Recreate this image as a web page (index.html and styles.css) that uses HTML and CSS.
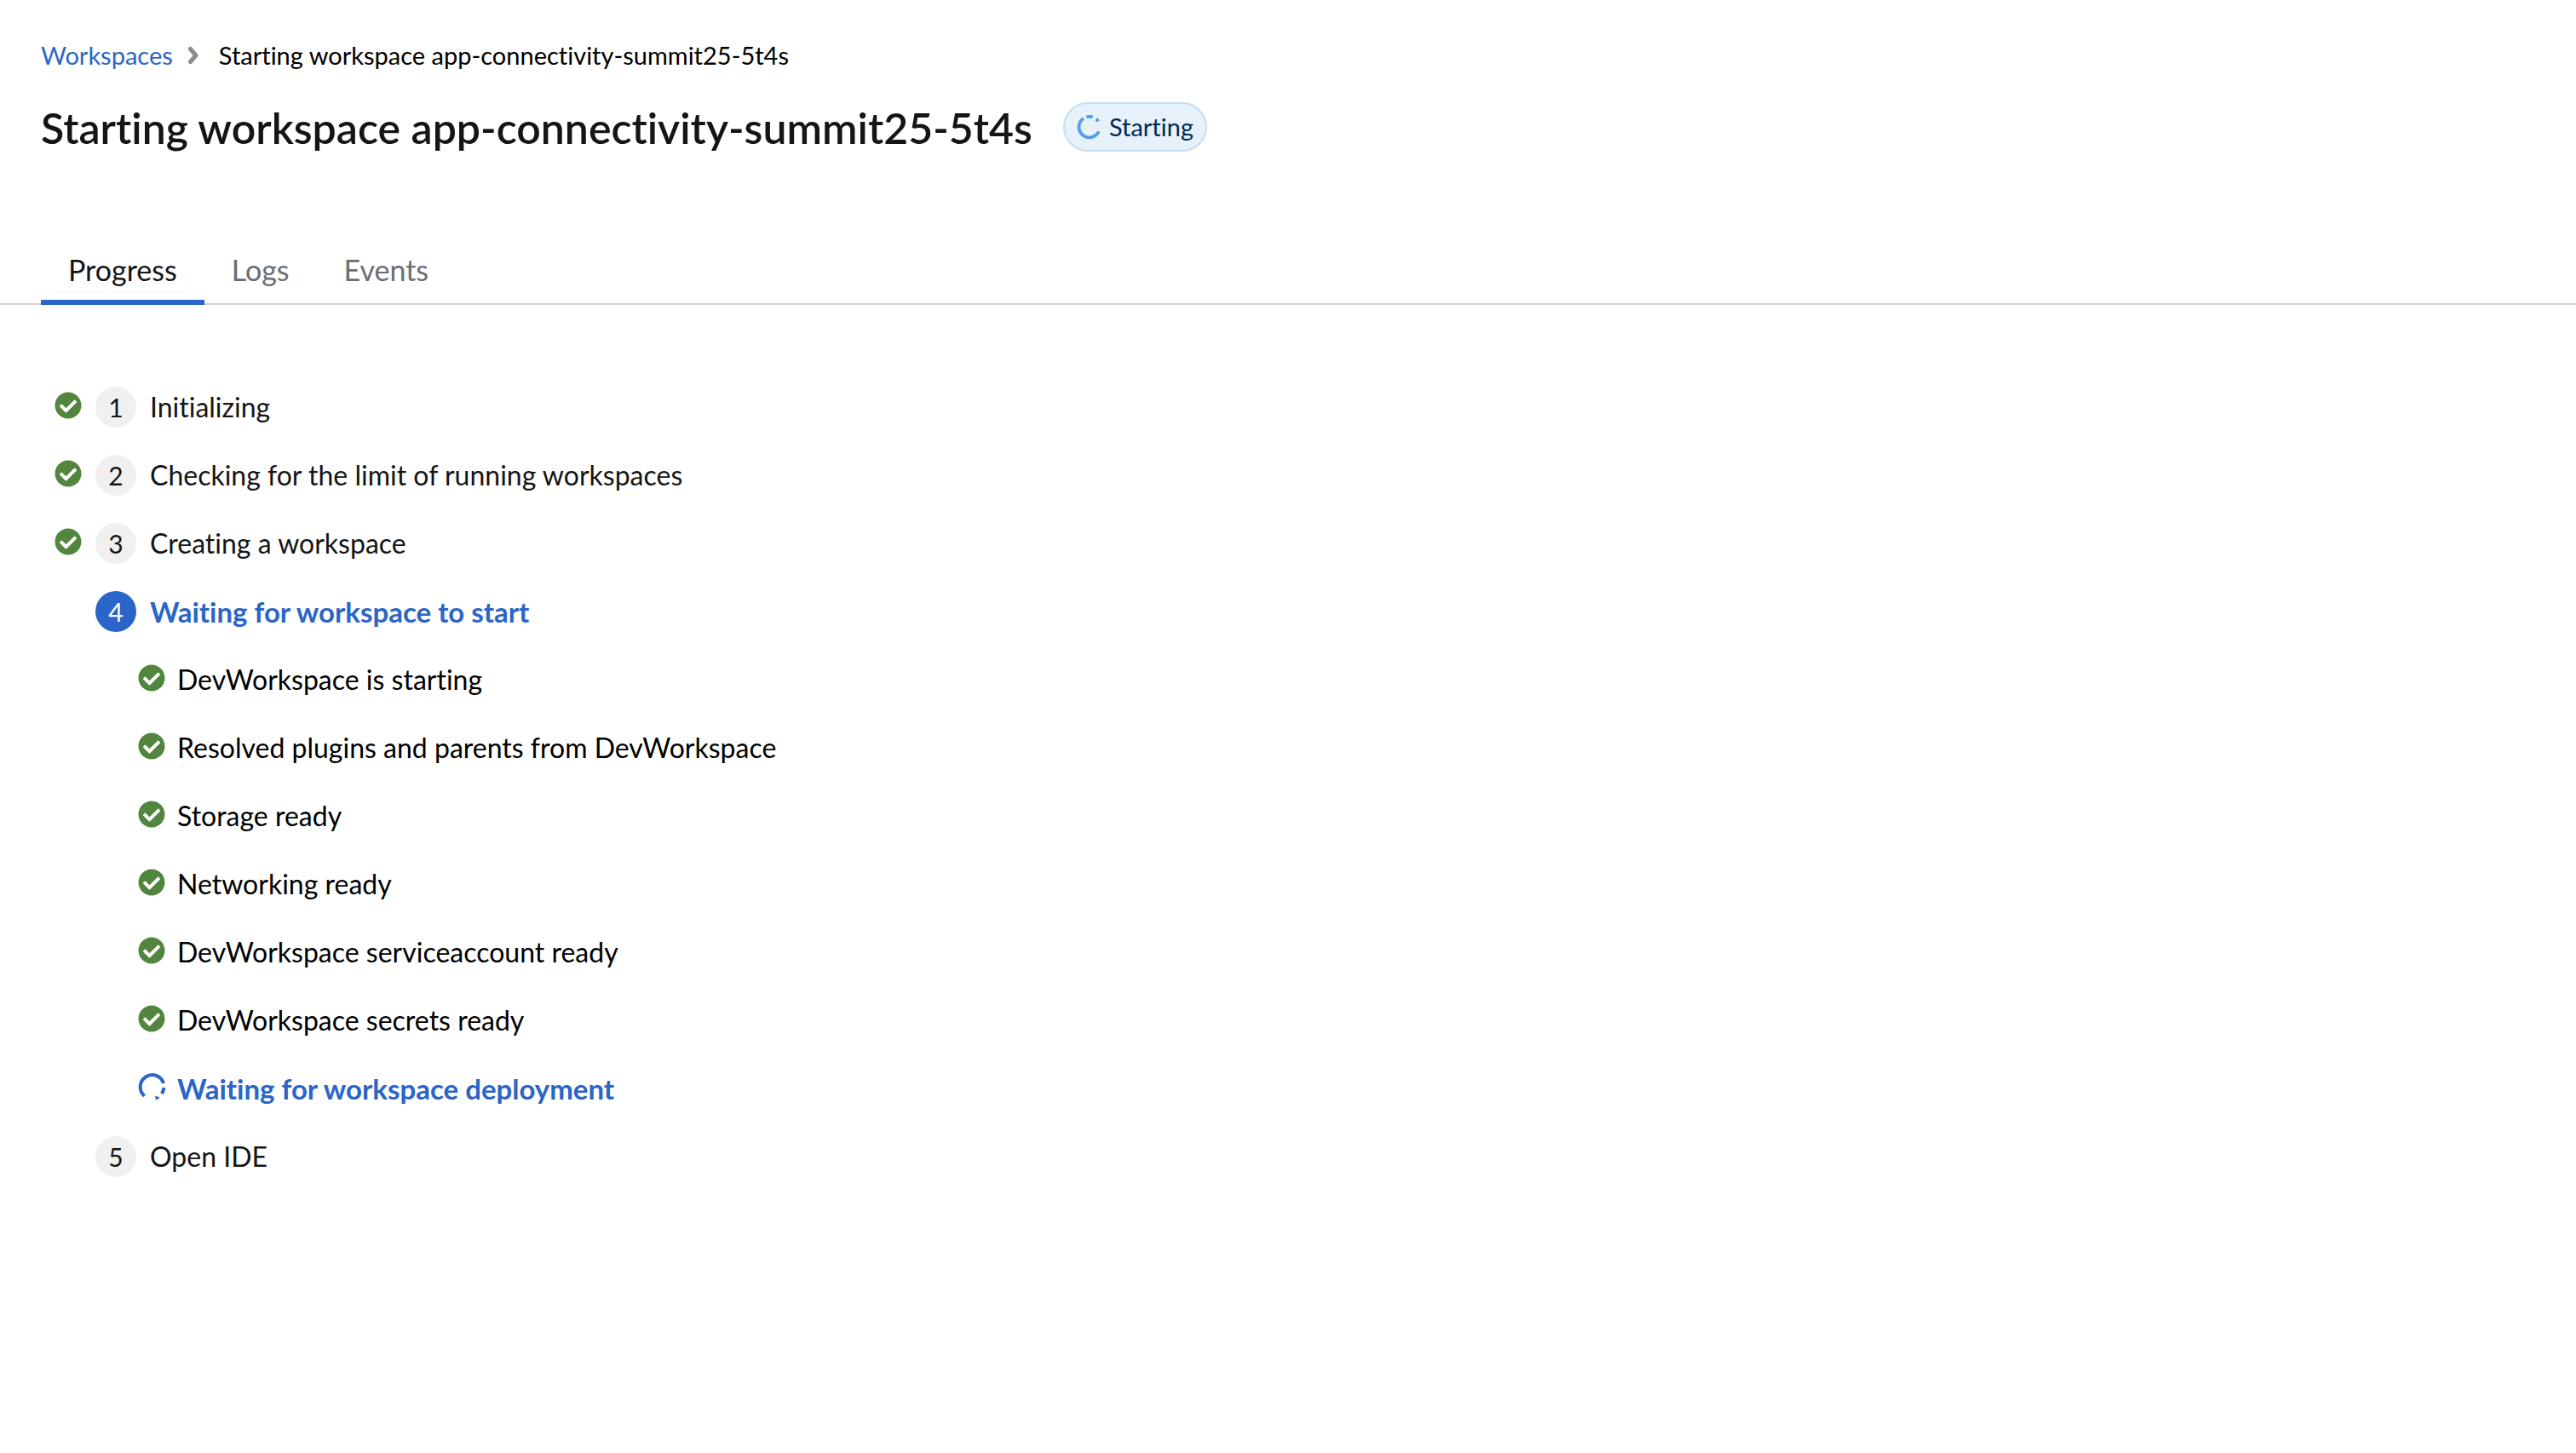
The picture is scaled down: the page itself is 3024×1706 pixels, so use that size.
FILE: index.html
```
<!DOCTYPE html>
<html lang="en">
<head>
  <meta charset="utf-8">
  <meta name="viewport" content="width=device-width, initial-scale=1">
  <title>Starting workspace app-connectivity-summit25-5t4s</title>
  <link rel="stylesheet" href="styles.css">
</head>
<body>
  <svg width="0" height="0" class="sprite" aria-hidden="true">
    <symbol id="check" viewBox="0 0 512 512">
      <path d="M504 256c0 137-111 248-248 248S8 393 8 256 119 8 256 8s248 111 248 248zM227.300 387.300l184-184c6.200-6.200 6.200-16.400 0-22.600l-22.600-22.600c-6.200-6.200-16.400-6.200-22.600 0L216 308.100l-70.100-70.100c-6.200-6.200-16.400-6.200-22.600 0l-22.600 22.600c-6.200 6.200-6.200 16.400 0 22.600l104 104c6.200 6.200 16.400 6.200 22.600 .1z"/>
    </symbol>
  </svg>

  <header class="page-header">
    <nav aria-label="Breadcrumb">
      <ol class="breadcrumb">
        <li><a href="#workspaces">Workspaces</a></li>
        <li class="breadcrumb-current" aria-current="page">
          <svg class="chevron" viewBox="0 0 12 20" aria-hidden="true"><path d="M2.500 2.500 9 10l-6.500 7.500"/></svg>
          Starting workspace app-connectivity-summit25-5t4s
        </li>
      </ol>
    </nav>
    <div class="title-row">
      <h1>Starting workspace app-connectivity-summit25-5t4s</h1>
      <span class="status">
        <svg class="status-icon" viewBox="0 0 32 32" aria-hidden="true">
          <path d="M27.500 21.700A13 13 0 1 1 8.500 5.400"/>
          <path d="M12.200 3.600A13 13 0 0 1 20 3.600"/>
          <path d="M24.500 6.200A13 13 0 0 1 27 9"/>
        </svg>
        Starting
      </span>
    </div>
  </header>

  <div class="tabs" role="tablist">
    <button class="tab tab-active" type="button" role="tab" aria-selected="true">Progress</button>
    <button class="tab" type="button" role="tab" aria-selected="false">Logs</button>
    <button class="tab" type="button" role="tab" aria-selected="false">Events</button>
  </div>

  <main class="progress">
    <ol class="steps">
      <li><div class="step"><svg class="icon"><use href="#check"/></svg><span class="number">1</span>Initializing</div></li>
      <li><div class="step"><svg class="icon"><use href="#check"/></svg><span class="number">2</span>Checking for the limit of running workspaces</div></li>
      <li><div class="step"><svg class="icon"><use href="#check"/></svg><span class="number">3</span>Creating a workspace</div></li>
      <li>
        <div class="step step-current"><span class="icon"></span><span class="number">4</span>Waiting for workspace to start</div>
        <ul class="substeps">
          <li class="substep"><svg class="icon"><use href="#check"/></svg>DevWorkspace is starting</li>
          <li class="substep"><svg class="icon"><use href="#check"/></svg>Resolved plugins and parents from DevWorkspace</li>
          <li class="substep"><svg class="icon"><use href="#check"/></svg>Storage ready</li>
          <li class="substep"><svg class="icon"><use href="#check"/></svg>Networking ready</li>
          <li class="substep"><svg class="icon"><use href="#check"/></svg>DevWorkspace serviceaccount ready</li>
          <li class="substep"><svg class="icon"><use href="#check"/></svg>DevWorkspace secrets ready</li>
          <li class="substep substep-current">
            <svg class="icon spinner" viewBox="0 0 32 32" aria-hidden="true">
              <path d="M7.600 26.800A14 14 0 1 1 30 11.800"/>
              <path d="M30.400 17A14 14 0 0 1 27.800 24.200"/>
              <path class="spinner-dot" d="M20 26.500l6 2.200-5 3z"/>
            </svg>Waiting for workspace deployment
          </li>
        </ul>
      </li>
      <li><div class="step"><span class="icon"></span><span class="number">5</span>Open IDE</div></li>
    </ol>
  </main>
</body>
</html>
```
FILE: styles.css
```
* {
  box-sizing: border-box;
}

body {
  margin: 0;
  background: #fff;
  color: #151515;
  font-family: Lato, "Open Sans", sans-serif;
  font-size: 32px;
  font-variant-ligatures: none;
  line-height: 48px;
}

ol,
ul {
  margin: 0;
  padding: 0;
  list-style: none;
}

.sprite {
  position: absolute;
}

.page-header {
  padding: 44px 48px 0;
}

.breadcrumb {
  display: flex;
  gap: 18px;
  color: #000;
  font-size: 29px;
  line-height: 42px;
}

.breadcrumb a {
  color: #2b65c7;
  text-decoration: none;
}

.breadcrumb-current {
  display: flex;
  align-items: center;
  gap: 24px;
}

.chevron {
  width: 12px;
  height: 20px;
  fill: none;
  stroke: #8a8d90;
  stroke-width: 5px;
  stroke-linejoin: round;
  stroke-linecap: round;
  overflow: visible;
}

.title-row {
  display: flex;
  align-items: center;
  gap: 36px;
  padding-top: 32px;
}

h1 {
  margin: 0;
  font-size: 50px;
  font-weight: 600;
  line-height: 64px;
}

.status {
  display: flex;
  align-items: center;
  gap: 8px;
  height: 58px;
  margin-bottom: 2px;
  padding: 0 14px;
  border: 2px solid #bee1f4;
  border-radius: 29px;
  background: #e7f1fa;
  color: #002952;
  font-size: 29px;
}

.status-icon {
  width: 30px;
  height: 30px;
  fill: none;
  stroke: #519de9;
  stroke-width: 4px;
}

.tabs {
  display: flex;
  margin-top: 98px;
  padding: 0 48px;
  border-bottom: 2px solid #d2d2d2;
}

.tab {
  margin-bottom: -2px;
  padding: 13px 32px 11px;
  border: 0;
  border-bottom: 6px solid transparent;
  background: none;
  color: #6a6e73;
  font: inherit;
  font-size: 34px;
  line-height: 48px;
  cursor: pointer;
}

.tab-active {
  border-bottom-color: #2b65c7;
  color: #151515;
}

.progress {
  padding: 96px 64px;
}

.steps li + li,
.substeps {
  margin-top: 32px;
}

.step,
.substep {
  display: flex;
  align-items: center;
  gap: 16px;
}

.icon {
  flex: none;
  width: 32px;
  height: 32px;
  margin-bottom: 4px;
  fill: #52853e;
}

.number {
  width: 48px;
  height: 48px;
  border-radius: 50%;
  background: #f0f0f0;
  font-size: 30px;
  text-align: center;
}

.step-current,
.substep-current {
  color: #2b65c7;
  font-size: 33px;
  font-weight: 700;
}

.step-current .number {
  background: #2b65c7;
  color: #fff;
  font-weight: 400;
}

.substeps {
  padding-left: 98px;
  color: #000;
}

.substep {
  gap: 14px;
}

.spinner {
  fill: none;
  stroke: #2b65c7;
  stroke-width: 4px;
  overflow: visible;
}

.spinner-dot {
  fill: #2b65c7;
  stroke: none;
}
```
